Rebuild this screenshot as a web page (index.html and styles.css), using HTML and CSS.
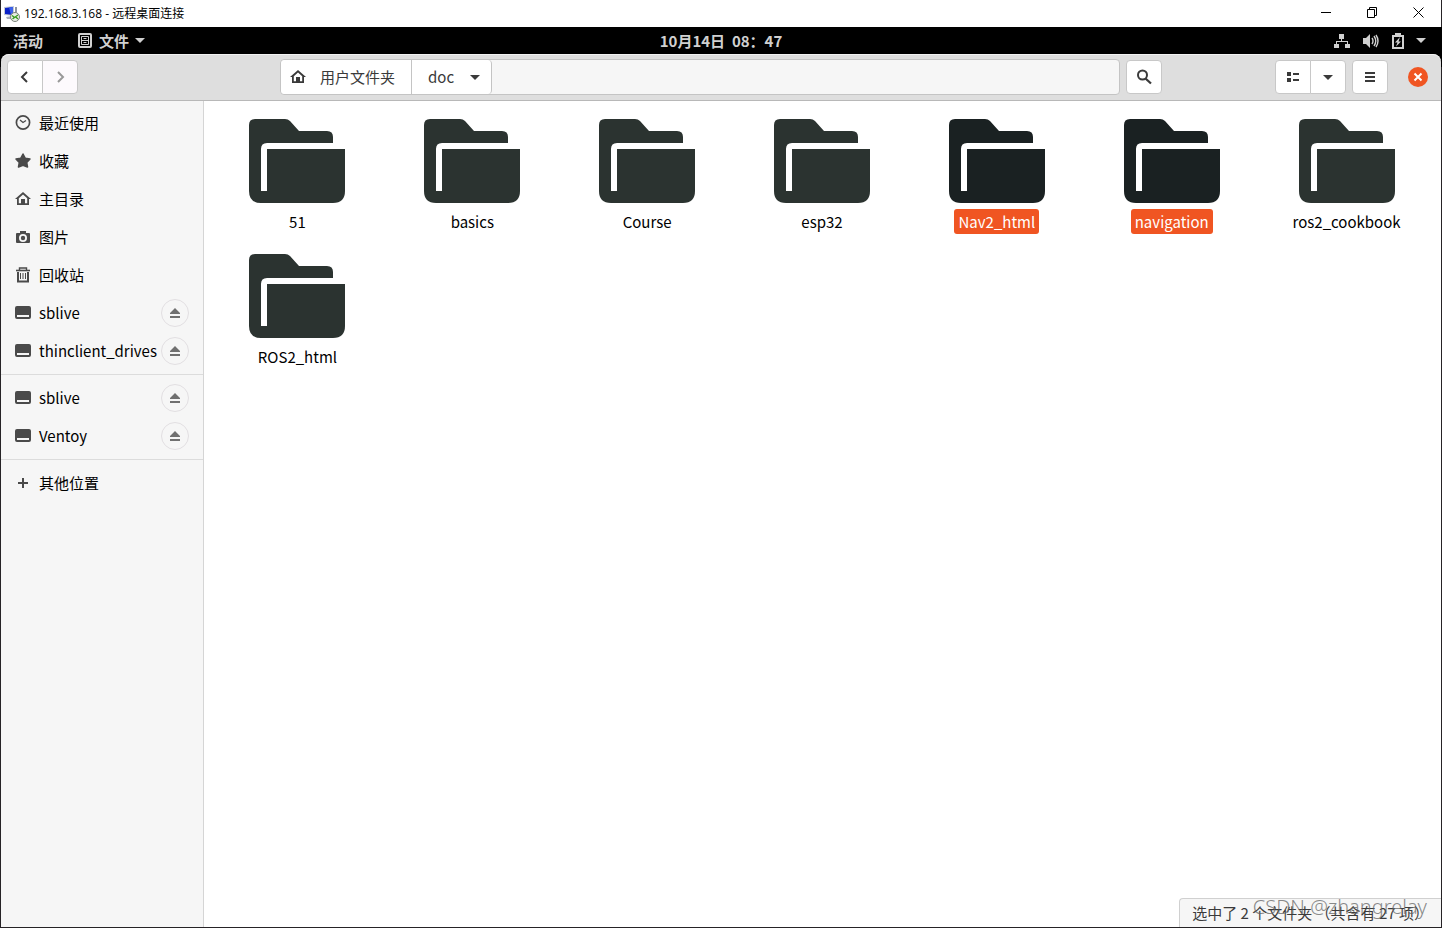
FILE: index.html
```
<!DOCTYPE html>
<html lang="zh-CN">
<head>
  <meta charset="UTF-8">
  <meta name="viewport" content="width=device-width, initial-scale=1.0">
  <title>192.168.3.168 - 远程桌面连接</title>
  <link rel="stylesheet" href="styles.css">
</head>
<body>
  <!-- shared shapes -->
  <svg class="defs" aria-hidden="true">
    <symbol id="folder" viewBox="0 0 96 84">
      <path d="M6 0H36Q39 0 41 2L50 12H78Q84 12 84 18V24H18Q12 24 12 30V72H18V30H96V72Q96 84 84 84H12Q0 84 0 72V6Q0 0 6 0Z"/>
    </symbol>
    <symbol id="home" viewBox="0 0 16 16">
      <path d="M8 1 0 8H2V14H14V8H16ZM8 3.4 12.2 7.2V12.2H10V8H6V12.2H3.8V7.2Z" fill-rule="evenodd"/>
    </symbol>
    <symbol id="drive" viewBox="0 0 16 13">
      <path d="M2 0H14Q16 0 16 2V11Q16 13 14 13H2Q0 13 0 11V2Q0 0 2 0ZM2 9V11H14V9Z" fill-rule="evenodd"/>
    </symbol>
    <symbol id="eject" viewBox="0 0 12 12">
      <path d="M6 1 11 6V7H1V6ZM1 9H11V11H1Z"/>
    </symbol>
    <symbol id="down" viewBox="0 0 10 5">
      <path d="M0 0H10L5 5Z"/>
    </symbol>
  </svg>

  <div class="window">
    <header class="titlebar">
      <svg class="app-icon" viewBox="0 0 16 16" width="16" height="16">
        <path d="M0 1 10 0V10L0 9Z" fill="#c3c9d6"/>
        <path d="M1 2 9 1V9L1 8Z" fill="#0b22c8"/>
        <path d="M5 1.5 9 1V9L7 8.7Z" fill="#3c62ea"/>
        <path d="M11 1H13V8H11Z" fill="#8d939f"/>
        <path d="M2 11 8 10V13H3Z" fill="#aab0bb"/>
        <circle cx="11" cy="11" r="4.5" fill="#e9eee6" stroke="#7b8178"/>
        <path d="M8 9.5 10.5 11.5 8.5 13M14 9 11.5 10.8 14 13" fill="none" stroke="#379b1c" stroke-width="1.3"/>
      </svg>
      <span class="title">192.168.3.168 - 远程桌面连接</span>
      <button class="win-btn" aria-label="最小化"><svg width="11" height="11"><path d="M0 5.5H10"/></svg></button>
      <button class="win-btn" aria-label="还原"><svg width="11" height="11"><path d="M.5 2.5H7.5V10.5H.5ZM2.5 2.5V.5H9.5V8.5H7.5"/></svg></button>
      <button class="win-btn" aria-label="关闭"><svg width="11" height="11"><path d="M.5.5 10.5 10.5M10.5.5.5 10.5"/></svg></button>
    </header>

    <div class="topbar">
      <div class="topbar-left">
        <button class="top-btn">活动</button>
        <button class="top-btn">
          <svg width="14" height="16" viewBox="0 0 14 16" fill="none" stroke="currentColor">
            <rect x="1" y="1" width="12" height="13" rx="1" stroke-width="2"/>
            <path d="M3.5 7.5H10.5M3.5 3.5H10.5V11.5H3.5ZM5.5 5.5H8.5M5.5 9.5H8.5"/>
          </svg>
          文件
          <svg class="caret" width="10" height="5"><use href="#down"/></svg>
        </button>
      </div>
      <button class="top-btn clock">10月14日&nbsp; 08：47</button>
      <button class="top-btn status-menu" aria-label="系统菜单">
        <svg width="16" height="16" viewBox="0 0 16 16">
          <path d="M5 1H10V6H8V8H14V11H16V15H11V11H13V9H3V11H5V15H0V11H2V8H7V6H5Z"/>
        </svg>
        <svg width="16" height="16" viewBox="0 0 16 16">
          <path d="M0 5H3L7 1V15L3 11H0Z"/>
          <path d="M9 5Q11 8 9 11M11 3Q14.5 8 11 13M13 2Q17 8 13 14" fill="none" stroke="currentColor" stroke-width="1.4"/>
        </svg>
        <svg width="12" height="16" viewBox="0 0 12 16">
          <path d="M3 0H9V2H12V16H0V2H3ZM2 4V14H10V4Z" fill-rule="evenodd"/>
          <path d="M8 4 3 9.5H5.5L4 13.5 9 8.5H6.5Z"/>
        </svg>
        <svg class="caret" width="10" height="5"><use href="#down"/></svg>
      </button>
    </div>

    <div class="headerbar">
      <div class="group">
        <button class="btn" aria-label="后退"><svg width="16" height="16" viewBox="0 0 16 16"><path class="chevron" d="M10 3 5 8 10 13"/></svg></button>
        <button class="btn" aria-label="前进" disabled><svg width="16" height="16" viewBox="0 0 16 16"><path class="chevron" d="M6 3 11 8 6 13"/></svg></button>
      </div>
      <div class="location">
        <nav class="pathbar">
          <button class="crumb crumb-home"><svg width="16" height="16"><use href="#home"/></svg>用户文件夹</button>
          <button class="crumb crumb-current">doc<svg width="10" height="5"><use href="#down"/></svg></button>
        </nav>
        <button class="btn" aria-label="搜索">
          <svg width="16" height="16" viewBox="0 0 16 16" fill="none" stroke="currentColor"><circle cx="6.5" cy="6" r="4.5" stroke-width="2"/><path d="M9.5 9.5 15 14.5" stroke-width="2.3"/></svg>
        </button>
      </div>
      <div class="actions">
        <div class="group">
          <button class="btn" aria-label="列表视图"><svg width="14" height="12" viewBox="0 0 14 12"><path d="M1 1H5V5H1ZM1 7H5V11H1ZM7 2H13V4H7ZM7 8H13V10H7Z"/></svg></button>
          <button class="btn" aria-label="视图选项"><svg width="10" height="5"><use href="#down"/></svg></button>
        </div>
        <button class="btn" aria-label="菜单"><svg width="10" height="10"><path d="M0 0H10V2H0ZM0 4H10V6H0ZM0 8H10V10H0Z"/></svg></button>
        <button class="close" aria-label="关闭窗口"><svg width="10" height="10" viewBox="0 0 10 10"><path d="M1.5 1.5 8.5 8.5M8.5 1.5 1.5 8.5"/></svg></button>
      </div>
    </div>

    <div class="main">
      <nav class="sidebar">
        <ul>
          <li><a href="#"><svg viewBox="0 0 16 16"><circle cx="8" cy="7.5" r="6.6" fill="none" stroke="currentColor" stroke-width="1.7"/><path d="M5 5 8 7.5 11 5.5" fill="none" stroke="currentColor" stroke-width="1.3"/></svg>最近使用</a></li>
          <li><a href="#"><svg viewBox="0 0 16 16"><path d="M8 1 10.3 5.3 15 6 11.7 9.5 12.5 14 8 12.3 3.5 14 4.3 9.5 1 6 5.7 5.3Z" stroke="currentColor" stroke-width="1.5" stroke-linejoin="round"/></svg>收藏</a></li>
          <li><a href="#"><svg viewBox="0 0 16 16"><use href="#home"/></svg>主目录</a></li>
          <li><a href="#"><svg viewBox="0 0 16 16"><path d="M5 2H11V4H14Q15 4 15 5V13Q15 14 14 14H2Q1 14 1 13V5Q1 4 2 4H5ZM8 5A4 4 0 1 0 8 13A4 4 0 1 0 8 5Z" fill-rule="evenodd"/><circle cx="8" cy="9" r="2.2"/></svg>图片</a></li>
          <li><a href="#"><svg viewBox="0 0 16 16" fill="none" stroke="currentColor"><path d="M1 3.5H15" stroke-width="1.6"/><path d="M4.5 3V1H11.5V3" stroke-width="1.4"/><path d="M3 5V14.500H13V5" stroke-width="2"/><path d="M5.5 6V12M8 6V12M10.5 6V12"/></svg>回收站</a></li>
          <li><a href="#"><svg viewBox="0 0 16 16"><use href="#drive" height="13" y="1"/></svg>sblive</a><button class="eject" aria-label="弹出 sblive"><svg><use href="#eject"/></svg></button></li>
          <li><a href="#"><svg viewBox="0 0 16 16"><use href="#drive" height="13" y="1"/></svg>thinclient_drives</a><button class="eject" aria-label="弹出 thinclient_drives"><svg><use href="#eject"/></svg></button></li>
        </ul>
        <ul>
          <li><a href="#"><svg viewBox="0 0 16 16"><use href="#drive" height="13" y="1"/></svg>sblive</a><button class="eject" aria-label="弹出 sblive"><svg><use href="#eject"/></svg></button></li>
          <li><a href="#"><svg viewBox="0 0 16 16"><use href="#drive" height="13" y="1"/></svg>Ventoy</a><button class="eject" aria-label="弹出 Ventoy"><svg><use href="#eject"/></svg></button></li>
        </ul>
        <ul>
          <li><a href="#"><svg viewBox="0 0 16 16"><path d="M7 3H9V7H13V9H9V13H7V9H3V7H7Z"/></svg>其他位置</a></li>
        </ul>
      </nav>

      <main class="files">
        <a class="file" href="#"><svg><use href="#folder"/></svg><span>51</span></a>
        <a class="file" href="#"><svg><use href="#folder"/></svg><span>basics</span></a>
        <a class="file" href="#"><svg><use href="#folder"/></svg><span>Course</span></a>
        <a class="file" href="#"><svg><use href="#folder"/></svg><span>esp32</span></a>
        <a class="file selected" href="#"><svg><use href="#folder"/></svg><span>Nav2_html</span></a>
        <a class="file selected" href="#"><svg><use href="#folder"/></svg><span>navigation</span></a>
        <a class="file" href="#"><svg><use href="#folder"/></svg><span>ros2_cookbook</span></a>
        <a class="file" href="#"><svg><use href="#folder"/></svg><span>ROS2_html</span></a>
      </main>

      <div class="statusbar">选中了 2 个文件夹 （共含有 27 项）</div>
      <div class="watermark">CSDN @zhangrelay</div>
    </div>
  </div>
</body>
</html>
```
FILE: styles.css
```
* {
  box-sizing: border-box;
}

body {
  margin: 0;
  background: #262326;
  color: #000;
  font-family: "Noto Sans CJK SC", sans-serif;
  font-size: 15px;
  line-height: 24px;
}

button {
  margin: 0;
  padding: 0;
  border: none;
  background: none;
  color: inherit;
  font: inherit;
}

a {
  color: inherit;
  text-decoration: none;
}

ul {
  list-style: none;
  margin: 0;
  padding: 0;
}

svg {
  display: block;
  flex: none;
  fill: currentColor;
}

svg[fill="none"] {
  fill: none;
}

.defs {
  position: absolute;
  width: 0;
  height: 0;
}

.window {
  display: flex;
  flex-direction: column;
  min-height: 100vh;
  padding: 0 1px 1px;
  background: linear-gradient(#000, #000) 0 27px / 100% 40px no-repeat;
}

/* remote desktop title bar */
.titlebar {
  display: flex;
  align-items: center;
  height: 27px;
  padding-left: 3px;
  background: #fff;
  font-family: "Open Sans", "Noto Sans CJK SC", sans-serif;
  font-size: 12px;
}

.title {
  flex: 1;
  margin-left: 4px;
}

.win-btn {
  display: flex;
  align-items: center;
  justify-content: center;
  width: 46px;
  height: 24px;
}

.titlebar .win-btn {
  align-self: flex-start;
}

.win-btn svg {
  fill: none;
  stroke: #000;
}

/* system bar */
.topbar {
  display: grid;
  grid-template-columns: 1fr auto 1fr;
  align-items: center;
  height: 27px;
  background: #000;
  color: #d0d0d0;
  font-weight: bold;
}

.topbar-left {
  display: flex;
  gap: 35px;
  padding-left: 12px;
}

.top-btn {
  display: flex;
  align-items: center;
  gap: 7px;
}

.top-btn .caret {
  margin-left: -1px;
}

.clock {
  font-family: "Noto Sans CJK TC", sans-serif;
}

.status-menu {
  justify-self: end;
  gap: 13px;
  padding-right: 15px;
}

/* file manager header */
.headerbar {
  display: grid;
  grid-template-columns: 1fr minmax(0, 882px) 1fr;
  align-items: center;
  height: 47px;
  padding: 0 6px;
  border-bottom: 1px solid #b8b8b8;
  border-radius: 8px 8px 0 0;
  background: #dedede;
  box-shadow: inset 0 1px #f2f2f2;
  color: #3a3a3a;
}

.group {
  display: flex;
}

.btn {
  display: flex;
  align-items: center;
  justify-content: center;
  width: 36px;
  height: 34px;
  border: 1px solid #c8c8c8;
  border-radius: 4px;
  background: #fff;
}

.btn:disabled {
  background: #fdfafd;
  color: #999;
}

.group .btn:first-child {
  border-radius: 4px 0 0 4px;
}

.group .btn:last-child {
  margin-left: -1px;
  border-radius: 0 4px 4px 0;
}

.chevron {
  fill: none;
  stroke: currentColor;
  stroke-width: 2;
}

.location {
  display: flex;
  align-items: center;
  gap: 6px;
}

.pathbar {
  display: flex;
  flex: 1;
  height: 36px;
  border: 1px solid #c4c4c4;
  border-radius: 4px;
  background: #f6f6f6;
}

.crumb {
  display: flex;
  align-items: center;
  padding: 0 16px;
  border-right: 1px solid #c4c4c4;
  background: #fff;
}

.crumb-home {
  gap: 14px;
  padding-left: 9px;
  border-radius: 4px 0 0 4px;
}

.crumb-current {
  gap: 16px;
  padding-right: 11px;
  border-radius: 0 4px 4px 0;
}

.actions {
  display: flex;
  align-items: center;
  justify-content: flex-end;
  gap: 6px;
  padding-right: 7px;
}

.close {
  display: flex;
  align-items: center;
  justify-content: center;
  width: 20px;
  height: 20px;
  margin-left: 14px;
  border-radius: 50%;
  background: #f05522;
}

.close svg {
  stroke: #fff;
  stroke-width: 2;
}

.main {
  display: flex;
  flex: 1;
  position: relative;
  background: #fff;
}

/* places */
.sidebar {
  width: 203px;
  padding-top: 3px;
  border-right: 1px solid #d5d5d5;
  background: #f6f6f6;
}

.sidebar ul + ul {
  margin-top: 4px;
  padding-top: 4px;
  border-top: 1px solid #dcdcdc;
}

.sidebar li {
  display: flex;
  align-items: center;
  height: 38px;
  padding: 0 14px;
}

.sidebar a {
  display: flex;
  flex: 1;
  align-items: center;
  gap: 8px;
}

.sidebar a svg {
  width: 16px;
  height: 16px;
  color: #4a4a4a;
}

.eject {
  display: flex;
  align-items: center;
  justify-content: center;
  width: 28px;
  height: 28px;
  border: 1px solid #e2dfe2;
  border-radius: 50%;
  color: #707070;
}

.eject svg {
  width: 12px;
  height: 12px;
}

/* icon view */
.files {
  display: grid;
  flex: 1;
  grid-template-columns: repeat(7, 1fr);
  align-content: start;
  row-gap: 20px;
  padding: 18px 7px 18px 6px;
}

.file {
  display: flex;
  flex-direction: column;
  align-items: center;
  gap: 6px;
}

.file svg {
  width: 96px;
  height: 84px;
  color: #2b3330;
}

.file span {
  padding: 0 4px;
  border-radius: 3px;
  line-height: 25px;
}

.file.selected svg {
  color: #1a2122;
}

.file.selected span {
  background: #f05522;
  color: #fff;
}

.statusbar {
  position: absolute;
  right: 0;
  bottom: 0;
  height: 29px;
  padding: 2px 12px;
  border: 1px solid #d0d0d0;
  border-width: 1px 0 0 1px;
  border-radius: 4px 0 0 0;
  background: #f6f6f6;
  color: #3a3a3a;
}

.watermark {
  position: absolute;
  right: 14px;
  bottom: 8px;
  color: rgba(100, 100, 100, 0.75);
  font-family: "Noto Sans", sans-serif;
  font-size: 20px;
  font-weight: 300;
}
```
